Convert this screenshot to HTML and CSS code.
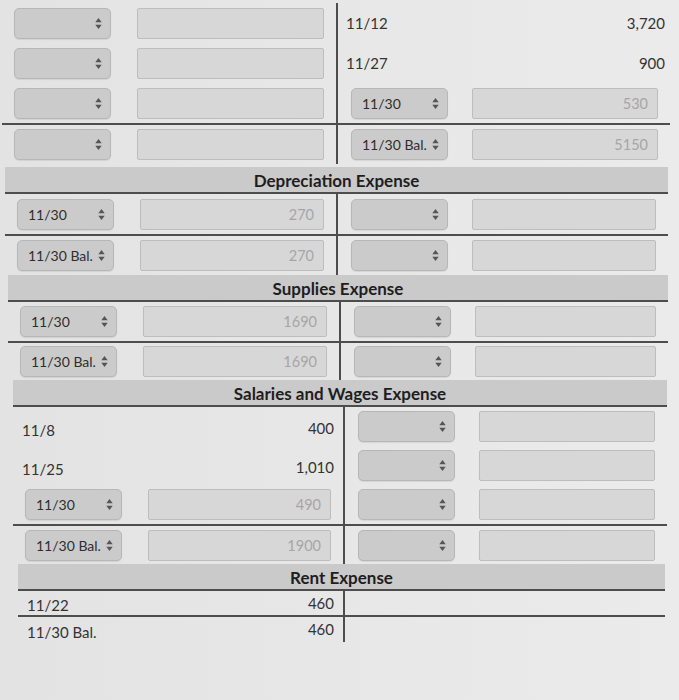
FILE: index.html
```html
<!DOCTYPE html>
<html>
<head>
<meta charset="utf-8">
<link rel="stylesheet" href="styles.css">
</head>
<body>
<div class="page">

  <section class="acct a1">
    <div class="tbl">
      <div class="row">
        <div class="cell lc"><span class="sel"><span class="sv"></span><svg class="arr" viewBox="0 0 7 12"><polygon points="3.5,0 7,4.6 0,4.6"/><polygon points="0,7.4 7,7.4 3.5,12"/></svg></span><span class="inp"></span></div>
        <div class="cell rc txt"><span>11/12</span><span>3,720</span></div>
      </div>
      <div class="row">
        <div class="cell lc"><span class="sel"><span class="sv"></span><svg class="arr" viewBox="0 0 7 12"><polygon points="3.5,0 7,4.6 0,4.6"/><polygon points="0,7.4 7,7.4 3.5,12"/></svg></span><span class="inp"></span></div>
        <div class="cell rc txt"><span>11/27</span><span>900</span></div>
      </div>
      <div class="row">
        <div class="cell lc"><span class="sel"><span class="sv"></span><svg class="arr" viewBox="0 0 7 12"><polygon points="3.5,0 7,4.6 0,4.6"/><polygon points="0,7.4 7,7.4 3.5,12"/></svg></span><span class="inp"></span></div>
        <div class="cell rc"><span class="sel"><span class="sv">11/30</span><svg class="arr" viewBox="0 0 7 12"><polygon points="3.5,0 7,4.6 0,4.6"/><polygon points="0,7.4 7,7.4 3.5,12"/></svg></span><span class="inp">530</span></div>
      </div>
      <div class="row sep">
        <div class="cell lc"><span class="sel"><span class="sv"></span><svg class="arr" viewBox="0 0 7 12"><polygon points="3.5,0 7,4.6 0,4.6"/><polygon points="0,7.4 7,7.4 3.5,12"/></svg></span><span class="inp"></span></div>
        <div class="cell rc"><span class="sel"><span class="sv">11/30 Bal.</span><svg class="arr" viewBox="0 0 7 12"><polygon points="3.5,0 7,4.6 0,4.6"/><polygon points="0,7.4 7,7.4 3.5,12"/></svg></span><span class="inp">5150</span></div>
      </div>
    </div>
  </section>

  <section class="acct a2">
    <div class="head">Depreciation Expense</div>
    <div class="tbl">
      <div class="row">
        <div class="cell lc"><span class="sel"><span class="sv">11/30</span><svg class="arr" viewBox="0 0 7 12"><polygon points="3.5,0 7,4.6 0,4.6"/><polygon points="0,7.4 7,7.4 3.5,12"/></svg></span><span class="inp">270</span></div>
        <div class="cell rc"><span class="sel"><span class="sv"></span><svg class="arr" viewBox="0 0 7 12"><polygon points="3.5,0 7,4.6 0,4.6"/><polygon points="0,7.4 7,7.4 3.5,12"/></svg></span><span class="inp"></span></div>
      </div>
      <div class="row sep">
        <div class="cell lc"><span class="sel"><span class="sv">11/30 Bal.</span><svg class="arr" viewBox="0 0 7 12"><polygon points="3.5,0 7,4.6 0,4.6"/><polygon points="0,7.4 7,7.4 3.5,12"/></svg></span><span class="inp">270</span></div>
        <div class="cell rc"><span class="sel"><span class="sv"></span><svg class="arr" viewBox="0 0 7 12"><polygon points="3.5,0 7,4.6 0,4.6"/><polygon points="0,7.4 7,7.4 3.5,12"/></svg></span><span class="inp"></span></div>
      </div>
    </div>
  </section>

  <section class="acct a3">
    <div class="head">Supplies Expense</div>
    <div class="tbl">
      <div class="row">
        <div class="cell lc"><span class="sel"><span class="sv">11/30</span><svg class="arr" viewBox="0 0 7 12"><polygon points="3.5,0 7,4.6 0,4.6"/><polygon points="0,7.4 7,7.4 3.5,12"/></svg></span><span class="inp">1690</span></div>
        <div class="cell rc"><span class="sel"><span class="sv"></span><svg class="arr" viewBox="0 0 7 12"><polygon points="3.5,0 7,4.6 0,4.6"/><polygon points="0,7.4 7,7.4 3.5,12"/></svg></span><span class="inp"></span></div>
      </div>
      <div class="row sep">
        <div class="cell lc"><span class="sel"><span class="sv">11/30 Bal.</span><svg class="arr" viewBox="0 0 7 12"><polygon points="3.5,0 7,4.6 0,4.6"/><polygon points="0,7.4 7,7.4 3.5,12"/></svg></span><span class="inp">1690</span></div>
        <div class="cell rc"><span class="sel"><span class="sv"></span><svg class="arr" viewBox="0 0 7 12"><polygon points="3.5,0 7,4.6 0,4.6"/><polygon points="0,7.4 7,7.4 3.5,12"/></svg></span><span class="inp"></span></div>
      </div>
    </div>
  </section>

  <section class="acct a4">
    <div class="head">Salaries and Wages Expense</div>
    <div class="tbl">
      <div class="row">
        <div class="cell lc txt"><span>11/8</span><span>400</span></div>
        <div class="cell rc"><span class="sel"><span class="sv"></span><svg class="arr" viewBox="0 0 7 12"><polygon points="3.5,0 7,4.6 0,4.6"/><polygon points="0,7.4 7,7.4 3.5,12"/></svg></span><span class="inp"></span></div>
      </div>
      <div class="row">
        <div class="cell lc txt"><span>11/25</span><span>1,010</span></div>
        <div class="cell rc"><span class="sel"><span class="sv"></span><svg class="arr" viewBox="0 0 7 12"><polygon points="3.5,0 7,4.6 0,4.6"/><polygon points="0,7.4 7,7.4 3.5,12"/></svg></span><span class="inp"></span></div>
      </div>
      <div class="row">
        <div class="cell lc"><span class="sel"><span class="sv">11/30</span><svg class="arr" viewBox="0 0 7 12"><polygon points="3.5,0 7,4.6 0,4.6"/><polygon points="0,7.4 7,7.4 3.5,12"/></svg></span><span class="inp">490</span></div>
        <div class="cell rc"><span class="sel"><span class="sv"></span><svg class="arr" viewBox="0 0 7 12"><polygon points="3.5,0 7,4.6 0,4.6"/><polygon points="0,7.4 7,7.4 3.5,12"/></svg></span><span class="inp"></span></div>
      </div>
      <div class="row sep">
        <div class="cell lc"><span class="sel"><span class="sv">11/30 Bal.</span><svg class="arr" viewBox="0 0 7 12"><polygon points="3.5,0 7,4.6 0,4.6"/><polygon points="0,7.4 7,7.4 3.5,12"/></svg></span><span class="inp">1900</span></div>
        <div class="cell rc"><span class="sel"><span class="sv"></span><svg class="arr" viewBox="0 0 7 12"><polygon points="3.5,0 7,4.6 0,4.6"/><polygon points="0,7.4 7,7.4 3.5,12"/></svg></span><span class="inp"></span></div>
      </div>
    </div>
  </section>

  <section class="acct a5">
    <div class="head">Rent Expense</div>
    <div class="tbl">
      <div class="row short">
        <div class="cell lc txt"><span>11/22</span><span>460</span></div>
        <div class="cell rc"></div>
      </div>
      <div class="row short sep">
        <div class="cell lc txt"><span>11/30 Bal.</span><span>460</span></div>
        <div class="cell rc"></div>
      </div>
    </div>
  </section>

</div>
</body>
</html>
```

FILE: styles.css
```css
* { box-sizing: border-box; }

html, body {
  margin: 0;
  padding: 0;
}

body {
  width: 679px;
  height: 700px;
  overflow: hidden;
  background: linear-gradient(90deg, #e3e3e3 0%, #e8e8e8 60%, #ebebeb 100%);
  font-family: Lato, "Noto Sans", sans-serif;
  color: #333;
}

.page {
  padding-top: 3px;
}

.acct {
  margin-left: var(--l);
  margin-right: var(--r);
}

.a1 { --l: 2px;  --r: 9px;  --lc: 336px; margin-bottom: 3px; }
.a2 { --l: 5px;  --r: 11px; --lc: 333px; }
.a3 { --l: 8px;  --r: 11px; --lc: 333px; }
.a4 { --l: 13px; --r: 12px; --lc: 332px; }
.a5 { --l: 18px; --r: 14px; --lc: 327px; }

.head {
  height: 27px;
  background: #cacaca;
  border-bottom: 2px solid #4d4d4d;
  text-align: center;
  font-weight: 700;
  font-size: 17px;
  line-height: 27px;
  color: #1e1e1e;
}

.row {
  display: grid;
  grid-template-columns: var(--lc) 1fr;
  height: 40px;
}

.a3 .row { height: 39px; }
.a4 .row { height: 39px; }

.row.sep {
  border-top: 2px solid #4d4d4d;
  height: 41px;
}
.a3 .row.sep { height: 39px; }
.a4 .row.sep { height: 40px; }

.row.short { height: 24px; }
.row.short.sep { height: 27px; }

.cell {
  display: flex;
  align-items: center;
  min-width: 0;
}

.lc {
  border-right: 2px solid #4d4d4d;
  padding: 0 12px 0 12px;
  gap: 26px;
}

.rc {
  padding: 0 12px 0 13px;
  gap: 24px;
}

.txt {
  justify-content: space-between;
  font-size: 15px;
  color: #333;
}
.lc.txt { padding: 0 9px 0 9px; }
.rc.txt { padding: 0 5px 0 8px; }

.a4 .lc.txt span:first-child { margin-top: 6px; }
.a4 .lc.txt span:last-child { margin-top: 2px; }
.a5 .lc.txt span:first-child { margin-top: 4px; }
.a5 .lc.txt span:last-child { margin-top: -1px; }

.sel {
  flex: 0 0 97px;
  height: 31px;
  display: flex;
  align-items: center;
  justify-content: space-between;
  padding: 0 8px 0 10px;
  background: #cbcbcb;
  border: 1px solid #b7b7b7;
  border-radius: 5px;
  box-shadow: 0 1px 1px rgba(0,0,0,0.08);
  font-size: 14px;
  color: #2e2e2e;
  white-space: nowrap;
}

.arr {
  width: 7px;
  height: 11px;
  fill: #555;
  flex: 0 0 7px;
}

.inp {
  flex: 1 1 auto;
  height: 31px;
  background: #d7d7d7;
  border: 1px solid #bdbdbd;
  border-radius: 2px;
  text-align: right;
  padding-right: 9px;
  font-size: 14.5px;
  font-weight: 400;
  line-height: 29px;
  color: #a6a6a6;
}
```
